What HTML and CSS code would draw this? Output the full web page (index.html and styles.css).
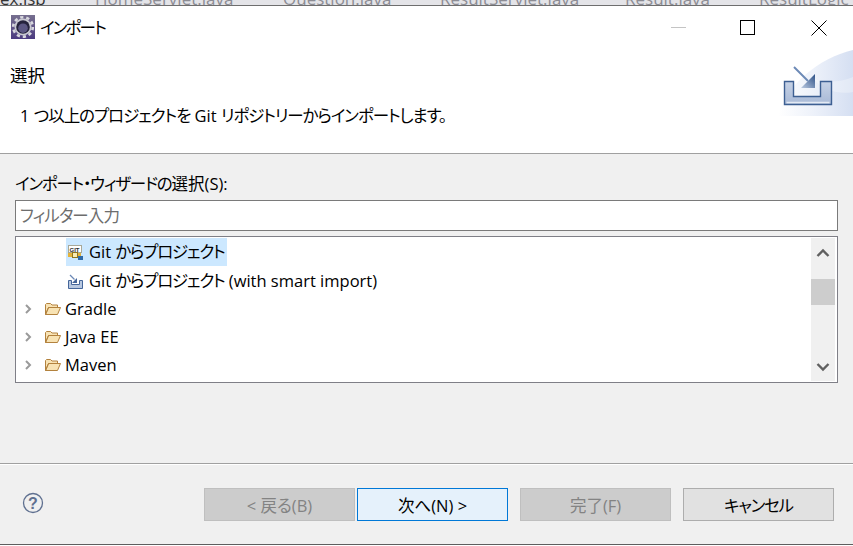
FILE: index.html
```html
<!DOCTYPE html>
<html lang="ja">
<head>
<meta charset="utf-8">
<title>インポート</title>
<link rel="stylesheet" href="styles.css">
</head>
<body>
<div class="window">
  <div class="tabstrip">
    <span class="tab tab-active">ex.jsp</span>
    <span class="tab tab-home">HomeServlet.java</span>
    <span class="tab tab-question">Question.java</span>
    <span class="tab tab-rs">ResultServlet.java</span>
    <span class="tab tab-result">Result.java</span>
    <span class="tab tab-logic">ResultLogic</span>
  </div>
  <div class="titlebar">
    <svg class="app-icon" width="24" height="24" viewBox="0 0 24 24">
      <defs><linearGradient id="ag" x1="0" y1="0" x2="0" y2="1"><stop offset="0" stop-color="#77708f"/><stop offset="1" stop-color="#4b3b80"/></linearGradient></defs>
      <rect width="24" height="24" fill="url(#ag)"/>
      <circle cx="12" cy="12" r="8.500" fill="#c9c9d2"/>
      <circle cx="12" cy="12" r="9.800" fill="none" stroke="#d8d8de" stroke-width="2.600" stroke-dasharray="3.200 2.950"/>
      <circle cx="12" cy="12" r="6.800" fill="#25223c"/>
      <circle cx="12" cy="13.200" r="4.800" fill="#5b5682"/>
    </svg>
    <span class="title">インポート</span>
    <div class="controls">
      <span class="ctl ctl-min"></span>
      <span class="ctl ctl-max"></span>
      <svg class="ctl-close" width="16" height="16" viewBox="0 0 16 16"><path d="M.5.5l15 15M15.5.5l-15 15" stroke="#000" fill="none"/></svg>
    </div>
  </div>
  <div class="banner">
    <div class="banner-text">
      <div class="banner-title">選択</div>
      <div class="banner-desc">1 <span class="j-wide">つ以上のプロジェクトを</span> Git <span class="j-wide">リポジトリーからインポートします。</span></div>
    </div>
    <svg class="banner-art" width="75" height="66" viewBox="0 0 75 66">
      <defs>
        <linearGradient id="bg" x1="0" y1="0" x2="1" y2="0"><stop offset="0" stop-color="#fff"/><stop offset=".45" stop-color="#eef2fa"/><stop offset="1" stop-color="#d5dff2"/></linearGradient>
        <linearGradient id="tr" x1="0" y1="0" x2="0" y2="1"><stop offset="0" stop-color="#c6d2e6"/><stop offset="1" stop-color="#a8b9d6"/></linearGradient>
        <linearGradient id="ar" x1="0" y1="1" x2="1" y2="0"><stop offset="0" stop-color="#bccbe2"/><stop offset="1" stop-color="#2b4f86"/></linearGradient>
      </defs>
      <path d="M0 66C8 36 40 8 75 0V66Z" fill="url(#bg)"/>
      <path d="M34 28C48 34 62 32 75 27V42C60 45 46 40 34 28Z" fill="#fff" opacity=".3"/>
      <path d="M6.500 31.500H15.500V46.500H42.500V31.500H53.500V54.500H6.500Z" fill="url(#tr)" stroke="#3d5f92" stroke-width="1.400"/>
      <path d="M8.500 52.500H51.500" stroke="#e4eaf4" stroke-width="1.500"/>
      <path d="M16 17L30 31" stroke="#6c8ab6" stroke-width="2"/>
      <path d="M23 38L37 24V38Z" fill="url(#ar)"/>
    </svg>
  </div>
  <div class="content">
    <label class="field-label"><span class="j">インポート・ウィザードの</span>選択(S):</label>
    <div class="filter">フィルター入力</div>
    <div class="tree">
      <div class="tree-rows">
        <div class="row row-child">
          <div class="row-sel">
            <svg width="16" height="16" viewBox="0 0 16 16">
              <rect x="1.500" y="1.500" width="13" height="7" fill="#fff" stroke="#a8a898"/>
              <text x="2.500" y="7.500" class="git-mark">GIT</text>
              <rect x="1" y="9" width="13" height="4" fill="#e3b23a"/>
              <rect x="5.500" y="8.500" width="5" height="5" fill="#f9ecb4" stroke="#8f7420"/>
              <rect x="11" y="12" width="5" height="4" fill="#2f6aa8"/>
            </svg>
            <span class="row-text">Git <span class="j">からプロジェクト</span></span>
          </div>
        </div>
        <div class="row row-child">
          <div class="row-plain">
            <svg width="16" height="16" viewBox="0 0 16 16">
              <path d="M1.500 7.500H4.500V11.500H12.500V7.500H15.500V15.500H1.500Z" fill="#b8c8e0" stroke="#45669a"/>
              <path d="M3 2L7.500 6.500" stroke="#6a88b5" stroke-width="1.200"/>
              <path d="M5 10L10 5V10Z" fill="#45669a"/>
            </svg>
            <span class="row-text">Git <span class="j">からプロジェクト</span> (with smart import)</span>
          </div>
        </div>
        <div class="row row-group">
          <svg class="chev" width="8" height="10" viewBox="0 0 8 10"><path d="M2 1l4 4-4 4" fill="none" stroke="#9a9a9a" stroke-width="2"/></svg>
          <svg class="folder" width="16" height="14" viewBox="0 0 16 14"><path d="M.5 12.500V2.500L1.500 1.500H5.500L7 3H12.500V5.500H3.500L.5 12.500ZM.5 12.500L3.500 5.500H15.500L12.500 12.500Z" fill="#f8e3b4" stroke="#b3823e"/></svg>
          <span class="row-text">Gradle</span>
        </div>
        <div class="row row-group">
          <svg class="chev" width="8" height="10" viewBox="0 0 8 10"><path d="M2 1l4 4-4 4" fill="none" stroke="#9a9a9a" stroke-width="2"/></svg>
          <svg class="folder" width="16" height="14" viewBox="0 0 16 14"><path d="M.5 12.500V2.500L1.500 1.500H5.500L7 3H12.500V5.500H3.500L.5 12.500ZM.5 12.500L3.500 5.500H15.500L12.500 12.500Z" fill="#f8e3b4" stroke="#b3823e"/></svg>
          <span class="row-text">Java EE</span>
        </div>
        <div class="row row-group">
          <svg class="chev" width="8" height="10" viewBox="0 0 8 10"><path d="M2 1l4 4-4 4" fill="none" stroke="#9a9a9a" stroke-width="2"/></svg>
          <svg class="folder" width="16" height="14" viewBox="0 0 16 14"><path d="M.5 12.500V2.500L1.500 1.500H5.500L7 3H12.500V5.500H3.500L.5 12.500ZM.5 12.500L3.500 5.500H15.500L12.500 12.500Z" fill="#f8e3b4" stroke="#b3823e"/></svg>
          <span class="row-text">Maven</span>
        </div>
      </div>
      <div class="scrollbar">
        <svg class="arrow" width="24" height="28" viewBox="0 0 24 28"><path d="M6.500 18l5.500-5.500 5.500 5.500" fill="none" stroke="#606060" stroke-width="2.400"/></svg>
        <div class="thumb"></div>
        <svg class="arrow arrow-down" width="24" height="28" viewBox="0 0 24 28"><path d="M6.500 11l5.500 5.500 5.500-5.500" fill="none" stroke="#606060" stroke-width="2.400"/></svg>
      </div>
    </div>
  </div>
  <div class="footer">
    <svg class="help" width="22" height="22" viewBox="0 0 22 22">
      <circle cx="11" cy="11" r="9.500" fill="none" stroke="#5f7090" stroke-width="1.300"/>
      <text x="11" y="16.500" class="help-mark">?</text>
    </svg>
    <div class="buttons">
      <button class="btn btn-off">&lt; 戻る(B)</button>
      <button class="btn btn-primary">次へ(N) &gt;</button>
      <button class="btn btn-off btn-gap">完了(F)</button>
      <button class="btn btn-cancel btn-gap"><span class="j">キャンセル</span></button>
    </div>
  </div>
</div>
</body>
</html>
```

FILE: styles.css
```css
* { box-sizing: border-box; }
html, body { margin: 0; padding: 0; }
body {
  width: 853px;
  height: 546px;
  overflow: hidden;
  background: #fff;
  font-family: "Open Sans", "Noto Sans CJK JP", sans-serif;
  font-size: 16.5px;
  font-feature-settings: "palt";
  color: #000;
}
.j { letter-spacing: -1.2px; }
.j-wide { letter-spacing: -1.05px; }
.window { display: flex; flex-direction: column; height: 546px; }

.tabstrip {
  height: 6px;
  flex: none;
  display: flex;
  align-items: flex-end;
  overflow: hidden;
  background: #e4e4e8;
  border-bottom: 1px solid #6e6e6e;
  color: #8c8c94;
  font-size: 17px;
  line-height: 16px;
}
.tab { flex: none; margin-bottom: -2px; }
.tab-active { color: #333; width: 95px; }
.tab-home { width: 188px; }
.tab-question { width: 157px; }
.tab-rs { width: 185px; }
.tab-result { width: 134px; }

.titlebar {
  height: 44px;
  flex: none;
  display: flex;
  align-items: center;
  padding: 0 0 0 11px;
  background: #fff;
}
.app-icon { flex: none; display: block; margin-top: -2px; }
.title { margin-left: 5px; margin-bottom: 2px; letter-spacing: -1.8px; }
.controls { margin-left: auto; display: flex; align-items: center; padding-right: 26px; margin-bottom: 1px; }
.ctl { display: block; flex: none; }
.ctl-min { width: 15px; height: 1px; background: #c4c4c4; margin-right: 54px; }
.ctl-max { width: 15px; height: 15px; border: 1px solid #000; margin-right: 56px; }
.ctl-close { display: block; flex: none; }

.banner {
  height: 104px;
  flex: none;
  display: flex;
  align-items: flex-start;
  background: #fff;
  border-bottom: 1px solid #a0a0a0;
}
.banner-text { padding-top: 13px; padding-left: 10px; }
.banner-title { line-height: 24px; font-size: 17.5px; }
.banner-desc { margin-top: 17px; margin-left: 10px; line-height: 24px; }
.banner-art { display: block; margin-left: auto; flex: none; }

.content { flex: 1; padding: 19px 15px 0; background: #f0f0f0; }
.field-label { display: block; line-height: 22px; }
.filter {
  height: 31px;
  margin-top: 5px;
  padding-left: 4px;
  width: 823px;
  background: #fff;
  border: 1px solid #7a7a7a;
  color: #6d6d6d;
  line-height: 29px;
  letter-spacing: -.9px;
}
.tree {
  height: 147px;
  width: 823px;
  margin-top: 5px;
  padding: 1px 2px 1px 0;
  display: flex;
  background: #fff;
  border: 1px solid #7f7f87;
}
.tree-rows { flex: 1; }
.row { height: 28px; display: flex; align-items: center; }
.row-child { padding-left: 50px; }
.row-child + .row-child { margin-top: 1px; }
.row-sel, .row-plain { display: flex; align-items: center; height: 28px; padding: 0 3px 0 1px; }
.row-sel { background: #cce8ff; }
.row-sel svg, .row-plain svg { flex: none; display: block; }
.row-text { margin-left: 6px; margin-bottom: 2px; white-space: nowrap; }
.row-group { padding-left: 8px; }
.chev { display: block; flex: none; }
.folder { display: block; flex: none; margin-left: 13px; }
.row-group .row-text { margin-left: 4px; }
.git-mark { font-size: 6px; font-weight: 700; font-family: "Liberation Sans", sans-serif; fill: #2c2c2c; letter-spacing: 0; }
.scrollbar { width: 24px; flex: none; display: flex; flex-direction: column; background: #f0f0f0; }
.arrow { display: block; flex: none; }
.thumb { height: 26px; margin-top: 13px; background: #cdcdcd; flex: none; }
.arrow-down { margin-top: auto; }

.footer {
  height: 82px;
  flex: none;
  display: flex;
  align-items: flex-start;
  padding: 24px 19px 0 22px;
  background: #f0f0f0;
  border-top: 1px solid #a0a0a0;
  box-shadow: inset 0 1px 0 #fff;
  border-bottom: 1px solid #5e5e5e;
  margin-bottom: 1px;
}
.help { display: block; flex: none; margin-top: 4px; }
.help-mark { font-size: 16px; font-weight: 700; text-anchor: middle; fill: #5f7090; font-family: "Liberation Sans", sans-serif; }
.buttons { margin-left: auto; display: flex; gap: 2px; }
.btn {
  width: 151px;
  height: 33px;
  padding: 0;
  font: inherit;
  font-feature-settings: "palt";
  border: 1px solid #adadad;
  background: #e1e1e1;
  color: #000;
}
.btn-off { background: #cccccc; border-color: #bfbfbf; color: #838383; }
.btn-primary { background: #e5f1fb; border: 1px solid #0078d7; }
.btn-gap { margin-left: 10px; }
```
